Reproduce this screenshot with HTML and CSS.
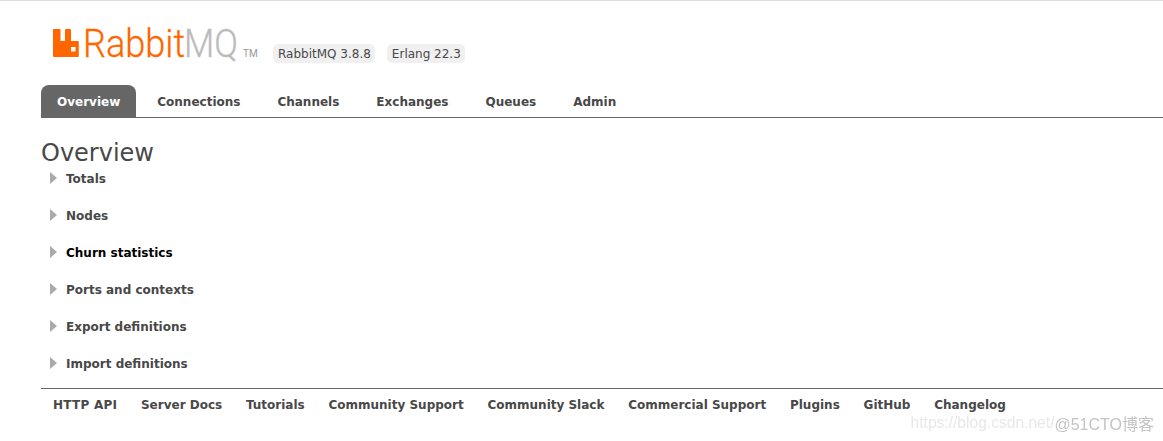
FILE: index.html
```html
<!DOCTYPE html>
<html lang="en">
<head>
    <meta charset="UTF-8">
    <meta name="viewport" content="width=device-width, initial-scale=1.0">
    <title>RabbitMQ Management</title>
    <link rel="stylesheet" href="styles.css">
</head>
<body>
    <div class="header">
        <svg class="logo" width="220" height="34" viewBox="0 0 220 34">
            <path fill-rule="evenodd" fill="#ff6600" d="M0 1Q0 0 1 0H6.500Q7.500 0 7.500 1V12H12V1Q12 0 13 0H17Q18 0 18 1V12H24.800Q25.800 12 25.800 13V27Q25.800 28 24.800 28H1Q0 28 0 27ZM18 18V22.500H22.500V18Z"/>
            <text class="logo-rabbit" transform="translate(30 28) scale(0.95 1)">Rabbit</text>
            <text class="logo-mq" transform="translate(131 28) scale(0.92 1)">MQ</text>
            <text class="logo-tm" x="190" y="28">TM</text>
        </svg>
        <span class="version">RabbitMQ 3.8.8</span>
        <span class="version">Erlang 22.3</span>
    </div>

    <ul class="tabs">
        <li class="tab active">Overview</li>
        <li class="tab">Connections</li>
        <li class="tab">Channels</li>
        <li class="tab">Exchanges</li>
        <li class="tab">Queues</li>
        <li class="tab">Admin</li>
    </ul>

    <div class="main">
        <h1>Overview</h1>
        <div class="section"><span class="arrow"></span>Totals</div>
        <div class="section"><span class="arrow"></span>Nodes</div>
        <div class="section hover"><span class="arrow"></span>Churn statistics</div>
        <div class="section"><span class="arrow"></span>Ports and contexts</div>
        <div class="section"><span class="arrow"></span>Export definitions</div>
        <div class="section"><span class="arrow"></span>Import definitions</div>
    </div>

    <ul class="footer">
        <li>HTTP API</li>
        <li>Server Docs</li>
        <li>Tutorials</li>
        <li>Community Support</li>
        <li>Community Slack</li>
        <li>Commercial Support</li>
        <li>Plugins</li>
        <li>GitHub</li>
        <li>Changelog</li>
    </ul>

    <div class="watermark"><span class="mark-url">https://blog.csdn.net/</span><span class="mark-cto">@51CTO博客</span></div>
</body>
</html>
```

FILE: styles.css
```css
body {
    font-family: "DejaVu Sans", Verdana, sans-serif;
    font-size: 12px;
    color: #484848;
    background-color: #fff;
    margin: 0;
    padding: 0;
    height: 441px;
    overflow: hidden;
    position: relative;
    border-top: 1px solid #ddd;
    box-sizing: border-box;
}
.header {
    display: flex;
    align-items: flex-end;
    height: 34px;
    padding: 28px 0 0 53px;
}
.logo {
    flex: none;
    overflow: visible;
    font-family: Roboto, "Liberation Sans", sans-serif;
}
.logo-rabbit, .logo-mq {
    font-size: 38px;
    font-weight: 300;
    fill: #ff6600;
    stroke: #ff6600;
    stroke-width: 0.3px;
}
.logo-mq {
    fill: #bbb;
    stroke: #bbb;
}
.logo-tm {
    font-size: 10px;
    fill: #999;
}
.version {
    background-color: #f0f0f0;
    border-radius: 5px;
    padding: 3px 4px 1px 5px;
    margin-right: 12px;
    line-height: 15px;
    font-size: 12px;
}
.tabs {
    display: flex;
    list-style: none;
    margin: 22px 0 0 41px;
    padding: 0;
    height: 32px;
    border-bottom: 1px solid #666;
}
.tab {
    font-weight: bold;
    line-height: 30px;
    padding: 2px 16px 0;
    margin-right: 5px;
    border-radius: 8px 8px 0 0;
}
.tab.active {
    background-color: #666;
    color: #fff;
}
.main {
    padding: 0 0 6px 41px;
}
h1 {
    font-size: 24px;
    font-weight: normal;
    line-height: 28px;
    margin: 21px 0 -7px;
}
.section {
    display: flex;
    align-items: center;
    font-weight: bold;
    height: 37px;
    padding-left: 9px;
}
.section.hover {
    color: #000;
}
.arrow {
    width: 0;
    height: 0;
    border-left: 7px solid #aaa;
    border-top: 6px solid transparent;
    border-bottom: 6px solid transparent;
    margin: -1px 9px 0 0;
}
.footer {
    display: flex;
    list-style: none;
    margin: 0 0 0 41px;
    padding: 0 0 0 12px;
    border-top: 1px solid #666;
    font-weight: bold;
    line-height: 32px;
    gap: 23.75px;
}
.footer li:first-child {
    letter-spacing: 0.25px;
}
.watermark {
    position: absolute;
    right: 9px;
    top: 410px;
    display: flex;
    align-items: center;
    filter: blur(0.5px);
}
.mark-url {
    font-family: "Liberation Sans", Arial, sans-serif;
    font-size: 15.6px;
    color: #e8e8e8;
}
.mark-cto {
    font-family: "Liberation Sans", "Noto Sans CJK SC", sans-serif;
    font-size: 16px;
    color: #c4c4c4;
}
```
